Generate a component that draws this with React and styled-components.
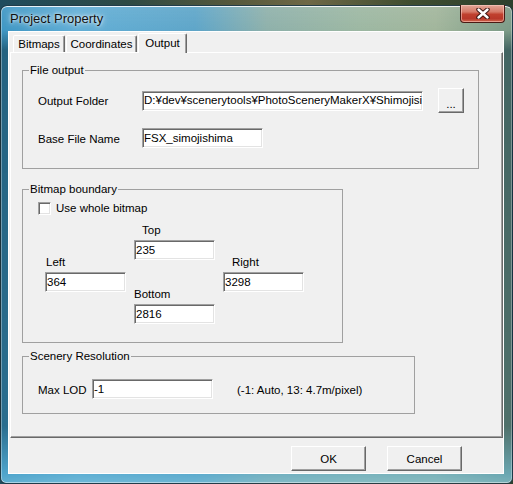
import React from 'react';
import styled, { createGlobalStyle } from 'styled-components';

const UI_FONT = `"Liberation Sans", "Noto Sans CJK JP", sans-serif`;

const Global = createGlobalStyle`
  html, body { margin: 0; padding: 0; }
  body {
    width: 513px; height: 484px; overflow: hidden;
    background: #2b3d2a;
    font-family: ${UI_FONT};
    color: #000;
  }
`;

const Desktop = styled.div`
  width: 513px; height: 484px; box-sizing: border-box; padding-top: 5px;
  background: linear-gradient(90deg, #1f4c5e 0%, #2e4a44 25%, #55583c 45%, #6e6846 60%, #3f4d30 80%, #2d402d 100%);
`;

const Window = styled.div`
  height: 479px; box-sizing: border-box;
  border: 1px solid rgba(20, 40, 50, 0.85);
  border-radius: 7px 7px 6px 6px;
  box-shadow: inset 0 1px 0 rgba(255,255,255,0.85), inset 1px 0 0 rgba(255,255,255,0.35), inset -1px 0 0 rgba(255,255,255,0.3), inset 0 -1px 0 rgba(255,255,255,0.45);
  background:
    linear-gradient(180deg, rgba(255,255,255,0.08) 0, rgba(0,0,0,0) 24px, rgba(8,45,60,0.5) 44px, rgba(8,45,60,0.4) 420px, rgba(90,175,210,0.55) 468px, rgba(120,190,215,0.6) 100%),
    linear-gradient(90deg, #3f97c4 0%, #63afd6 15%, #5fa6c9 38%, #8fb1ab 52%, #9db8a3 70%, #a2b69c 85%, #7c9b88 100%);
  display: flex; flex-direction: column;
  padding: 0 8px 9px 7px;
`;

const TitleBar = styled.div`
  height: 25px; flex: none;
  display: flex; align-items: flex-start;
  margin: 0 -8px 0 -7px; padding: 0 7px 0 9px;
`;

const Title = styled.div`
  font-family: "Liberation Sans", sans-serif; font-size: 13px; line-height: 15px;
  padding-top: 5px; color: #101010;
  text-shadow: 0 0 6px rgba(255,255,255,0.9), 0 0 3px rgba(255,255,255,0.8);
`;

const CloseButton = styled.div`
  margin-left: auto; margin-top: -1px;
  width: 45px; height: 18px; box-sizing: border-box;
  border: 1px solid #4a1a14; border-top: none;
  border-radius: 0 0 4px 4px;
  background: linear-gradient(180deg, #e2a898 0%, #d67a68 40%, #c0402e 55%, #b8382a 80%, #d06a50 100%);
  box-shadow: inset 0 0 0 1px rgba(255,210,200,0.55);
  display: flex; align-items: center; justify-content: center;
`;

const Client = styled.div`
  height: 443px; flex: none; box-sizing: border-box;
  border: 1px solid #fff;
  background: #f0f0f0;
  display: flex; flex-direction: column;
`;

const TabStrip = styled.div`
  height: 20px; flex: none;
  display: flex; align-items: flex-end; gap: 1px;
  padding-left: 4px;
`;

const Tab = styled.div`
  box-sizing: border-box; position: relative;
  width: ${p => p.$w}px;
  height: ${p => (p.$active ? 20 : 17)}px;
  margin-bottom: ${p => (p.$active ? -1 : 0)}px;
  z-index: ${p => (p.$active ? 2 : 0)};
  border: 1px solid; border-bottom: none;
  border-color: #fff #696969 transparent #fff;
  border-radius: 2px 2px 0 0;
  box-shadow: inset -1px 0 0 #a0a0a0;
  background: #f0f0f0;
  text-align: center; font-size: 11.5px; line-height: 14px;
  padding-top: ${p => (p.$active ? 2 : 1)}px;
`;

const TabPanel = styled.div`
  height: 386px; flex: none; box-sizing: border-box;
  margin-left: 1px;
  border: 1px solid; border-color: #fff #696969 #696969 #fff;
  box-shadow: inset -1px -1px 0 #a0a0a0;
  padding: 17px 0 0 11px;
  display: flex; flex-direction: column; align-items: flex-start;
`;

const Group = styled.div`
  position: relative; box-sizing: border-box;
  width: ${p => p.$w}px;
  margin-top: ${p => p.$mt || 0}px;
  border: 1px solid #a0a0a0;
  padding: ${p => p.$pad};
`;

const GroupLabel = styled.span`
  position: absolute; top: -8px; left: 6px;
  padding: 0 1px; background: #f0f0f0;
  font-size: 11.5px; line-height: 14px; white-space: nowrap;
`;

const FormGrid = styled.div`
  display: flex; flex-direction: column; gap: 15px;
`;

const FormRow = styled.div`
  display: flex; align-items: center;
  height: ${p => p.$h}px;
`;

const FieldLabel = styled.span`
  width: ${p => p.$w}px; flex: none;
  font-size: 11.5px; line-height: 14px; white-space: nowrap;
  padding-top: 1px;
`;

const TextBox = styled.input`
  box-sizing: border-box; flex: none;
  width: ${p => p.$w}px; height: 20px;
  margin: 0; padding: 0 0 1px 1px;
  border-style: solid; border-width: 1px;
  border-color: #a0a0a0 #fff #fff #a0a0a0;
  box-shadow: inset 1px 1px 0 #696969, inset -1px -1px 0 #e3e3e3;
  background: #fff; color: #000;
  font-family: ${UI_FONT};
  font-size: 11.5px; line-height: 14px;
  outline: none;
`;

const PushButton = styled.button`
  box-sizing: border-box; flex: none;
  width: ${p => p.$w}px; height: ${p => p.$h || 25}px;
  margin: 0 0 0 ${p => p.$ml || 0}px;
  padding: ${p => (p.$low ? '6px 0 0' : '0')};
  border: 1px solid; border-color: #fff #696969 #696969 #fff;
  box-shadow: inset -1px -1px 0 #a0a0a0;
  background: #f0f0f0; color: #000;
  font-family: ${UI_FONT};
  font-size: 11.5px; line-height: 14px;
`;

const CheckRow = styled.label`
  display: flex; align-items: center; gap: 5px;
  height: 14px; font-size: 11.5px; line-height: 14px;
`;

const CheckBox = styled.span`
  width: 13px; height: 13px; box-sizing: border-box; flex: none;
  border: 1px solid; border-color: #a0a0a0 #fff #fff #a0a0a0;
  box-shadow: inset 1px 1px 0 #696969, inset -1px -1px 0 #e3e3e3;
  background: #fff;
`;

const CoordArea = styled.div`
  display: flex; gap: 8px;
  margin: 8px 0 0 7px;
`;

const CoordColumn = styled.div`
  width: 81px; display: flex; flex-direction: column;
  padding-top: ${p => p.$pt || 0}px;
`;

const CoordLabel = styled.span`
  font-size: 11.5px; line-height: 14px;
  padding-left: ${p => p.$pl || 0}px;
  margin: ${p => p.$mt || 0}px 0 3px 0;
`;

const Hint = styled.span`
  margin-left: 24px; font-size: 11.5px; line-height: 14px; white-space: nowrap;
  padding-top: 1px;
`;

const Footer = styled.div`
  flex: 1;
  display: flex; justify-content: flex-end; align-items: flex-start;
  gap: 21px; padding: 8px 41px 0 0;
`;

function CloseGlyph() {
  return (
    <svg width="14" height="11" viewBox="0 0 14 11">
      <path d="M2.5 1.5 L11.5 9.5 M11.5 1.5 L2.5 9.5" stroke="#3a1410" strokeWidth="4.4" strokeLinecap="round" />
      <path d="M2.5 1.5 L11.5 9.5 M11.5 1.5 L2.5 9.5" stroke="#fff" strokeWidth="2.4" strokeLinecap="round" />
    </svg>
  );
}

export default function App() {
  return (
    <Desktop>
      <Global />
      <Window>
        <TitleBar>
          <Title>Project Property</Title>
          <CloseButton><CloseGlyph /></CloseButton>
        </TitleBar>
        <Client>
          <TabStrip>
            <Tab $w={52}>Bitmaps</Tab>
            <Tab $w={71}>Coordinates</Tab>
            <Tab $w={49} $active>Output</Tab>
          </TabStrip>
          <TabPanel>
            <Group $w={457} $pad="17px 0 20px 15px">
              <GroupLabel>File output</GroupLabel>
              <FormGrid>
                <FormRow $h={25}>
                  <FieldLabel $w={104}>Output Folder</FieldLabel>
                  <TextBox $w={281} readOnly value="D:¥dev¥scenerytools¥PhotoSceneryMakerX¥Shimojisima" />
                  <PushButton $w={26} $ml={15} $low>...</PushButton>
                </FormRow>
                <FormRow $h={20}>
                  <FieldLabel $w={104}>Base File Name</FieldLabel>
                  <TextBox $w={121} readOnly value="FSX_simojishima" />
                </FormRow>
              </FormGrid>
            </Group>

            <Group $w={321} $mt={20} $pad="11px 0 18px 15px">
              <GroupLabel>Bitmap boundary</GroupLabel>
              <CheckRow><CheckBox />Use whole bitmap</CheckRow>
              <CoordArea>
                <CoordColumn $pt={32}>
                  <CoordLabel $pl={1}>Left</CoordLabel>
                  <TextBox $w={81} readOnly value="364" />
                </CoordColumn>
                <CoordColumn>
                  <CoordLabel $pl={8}>Top</CoordLabel>
                  <TextBox $w={81} readOnly value="235" />
                  <CoordLabel $mt={27}>Bottom</CoordLabel>
                  <TextBox $w={81} readOnly value="2816" />
                </CoordColumn>
                <CoordColumn $pt={32}>
                  <CoordLabel $pl={9}>Right</CoordLabel>
                  <TextBox $w={81} readOnly value="3298" />
                </CoordColumn>
              </CoordArea>
            </Group>

            <Group $w={393} $mt={13} $pad="22px 0 14px 15px">
              <GroupLabel>Scenery Resolution</GroupLabel>
              <FormRow $h={20}>
                <FieldLabel $w={54}>Max LOD</FieldLabel>
                <TextBox $w={121} readOnly value="-1" />
                <Hint>(-1: Auto, 13: 4.7m/pixel)</Hint>
              </FormRow>
            </Group>
          </TabPanel>
          <Footer>
            <PushButton $w={75}>OK</PushButton>
            <PushButton $w={75}>Cancel</PushButton>
          </Footer>
        </Client>
      </Window>
    </Desktop>
  );
}
